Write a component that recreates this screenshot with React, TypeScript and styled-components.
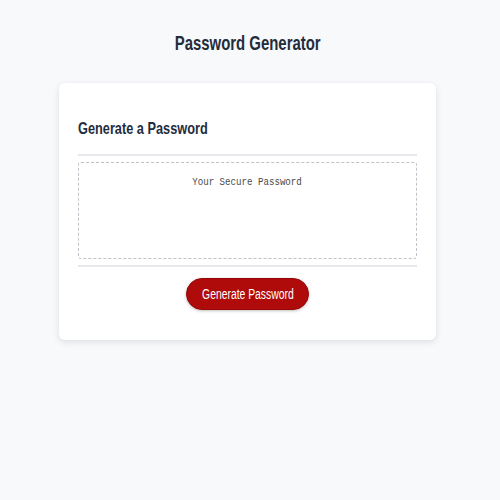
import React from "react";
import styled, { createGlobalStyle } from "styled-components";

const Global = createGlobalStyle`
  html, body { margin: 0; padding: 0; }
  body {
    background: #f8f9fb;
    font-family: "Liberation Sans", Arial, Helvetica, sans-serif;
    width: 500px;
    height: 500px;
  }
`;

const Page = styled.div`
  display: flex;
  flex-direction: column;
  align-items: center;
  padding: 30px 5px 0 0;
`;

const Narrow = styled.span<{ $scale: number }>`
  display: inline-block;
  white-space: nowrap;
  transform: scaleX(${(p) => p.$scale});
  transform-origin: center;
`;

const Title = styled.h1`
  margin: 0 0 27px;
  font-size: 21px;
  line-height: 26px;
  font-weight: 700;
  color: #1f2d3d;
`;

const Card = styled.div`
  width: 377px;
  box-sizing: border-box;
  background: #ffffff;
  border-radius: 6px;
  box-shadow: 0 2px 6px rgba(20, 30, 50, 0.12);
  padding: 36px 19px 30px;
  display: flex;
  flex-direction: column;
`;

const CardTitle = styled.h2`
  margin: 0 0 15px;
  font-size: 17px;
  line-height: 20px;
  font-weight: 700;
  color: #1f2d3d;
  display: flex;
`;

const Left = styled(Narrow)`
  transform-origin: left center;
`;

const Divider = styled.div`
  height: 2px;
  background: #e6e8ec;
`;

const Output = styled.div`
  margin: 6px 0;
  height: 97px;
  box-sizing: border-box;
  border: 1px dashed #bfc2c8;
  border-radius: 3px;
  display: flex;
  justify-content: center;
  align-items: flex-start;
  padding-top: 12px;
  font-family: "Liberation Mono", "Courier New", monospace;
  font-size: 11px;
  line-height: 14px;
  color: #4a4a4a;
  background: #fff;
`;

const Actions = styled.div`
  display: flex;
  justify-content: center;
  padding-top: 11px;
`;

const Button = styled.button`
  width: 123px;
  height: 32px;
  box-sizing: border-box;
  border: 1px solid #950808;
  border-radius: 16px;
  background: #b00b0b;
  color: #fff;
  font-family: inherit;
  font-size: 14px;
  box-shadow: 0 1px 3px rgba(0, 0, 0, 0.25);
  cursor: pointer;
  display: flex;
  align-items: center;
  justify-content: center;
  padding: 0;
`;

export default function App() {
  return (
    <>
      <Global />
      <Page>
        <Title>
          <Narrow $scale={0.71}>Password Generator</Narrow>
        </Title>
        <Card>
          <CardTitle>
            <Left $scale={0.75}>Generate a Password</Left>
          </CardTitle>
          <Divider />
          <Output>
            <Narrow $scale={0.83}>Your Secure Password</Narrow>
          </Output>
          <Divider />
          <Actions>
            <Button>
              <Narrow $scale={0.74}>Generate Password</Narrow>
            </Button>
          </Actions>
        </Card>
      </Page>
    </>
  );
}
